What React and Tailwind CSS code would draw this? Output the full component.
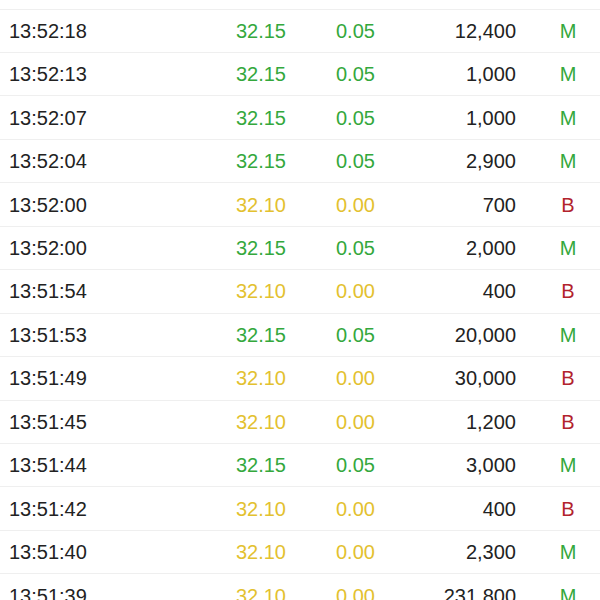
const trades = [
  ["13:52:18", "32.15", "0.05", "12,400", "M"],
  ["13:52:13", "32.15", "0.05", "1,000", "M"],
  ["13:52:07", "32.15", "0.05", "1,000", "M"],
  ["13:52:04", "32.15", "0.05", "2,900", "M"],
  ["13:52:00", "32.10", "0.00", "700", "B"],
  ["13:52:00", "32.15", "0.05", "2,000", "M"],
  ["13:51:54", "32.10", "0.00", "400", "B"],
  ["13:51:53", "32.15", "0.05", "20,000", "M"],
  ["13:51:49", "32.10", "0.00", "30,000", "B"],
  ["13:51:45", "32.10", "0.00", "1,200", "B"],
  ["13:51:44", "32.15", "0.05", "3,000", "M"],
  ["13:51:42", "32.10", "0.00", "400", "B"],
  ["13:51:40", "32.10", "0.00", "2,300", "M"],
  ["13:51:39", "32.10", "0.00", "231,800", "M"],
];

const TradeRow = ({ time, price, change, volume, side }) => {
  const up = change !== "0.00";
  const priceColor = up ? "text-[#34a83c]" : "text-[#e3c12f]";
  return (
    <div className="flex items-center h-[43.46px] border-b border-[#efefef] text-[20px] text-[#222]">
      <span className="shrink-0 pl-[9px] w-[120px]">{time}</span>
      <span className={`shrink-0 w-[166px] text-right ${priceColor}`}>{price}</span>
      <span className={`shrink-0 pl-[50px] w-[120px] ${priceColor}`}>{change}</span>
      <span className="shrink-0 w-[110px] text-right">{volume}</span>
      <span className={`flex-1 pl-[20px] text-center ${side === "M" ? "text-[#34a83c]" : "text-[#b2232d]"}`}>
        {side}
      </span>
    </div>
  );
};

export default function App() {
  return (
    <div className="w-[600px] h-[600px] overflow-hidden bg-white font-['Liberation_Sans',Arial,sans-serif]">
      <div className="h-[9.5px] border-b border-[#efefef]" />
      {trades.map(([time, price, change, volume, side], i) => (
        <TradeRow key={i} time={time} price={price} change={change} volume={volume} side={side} />
      ))}
    </div>
  );
}
